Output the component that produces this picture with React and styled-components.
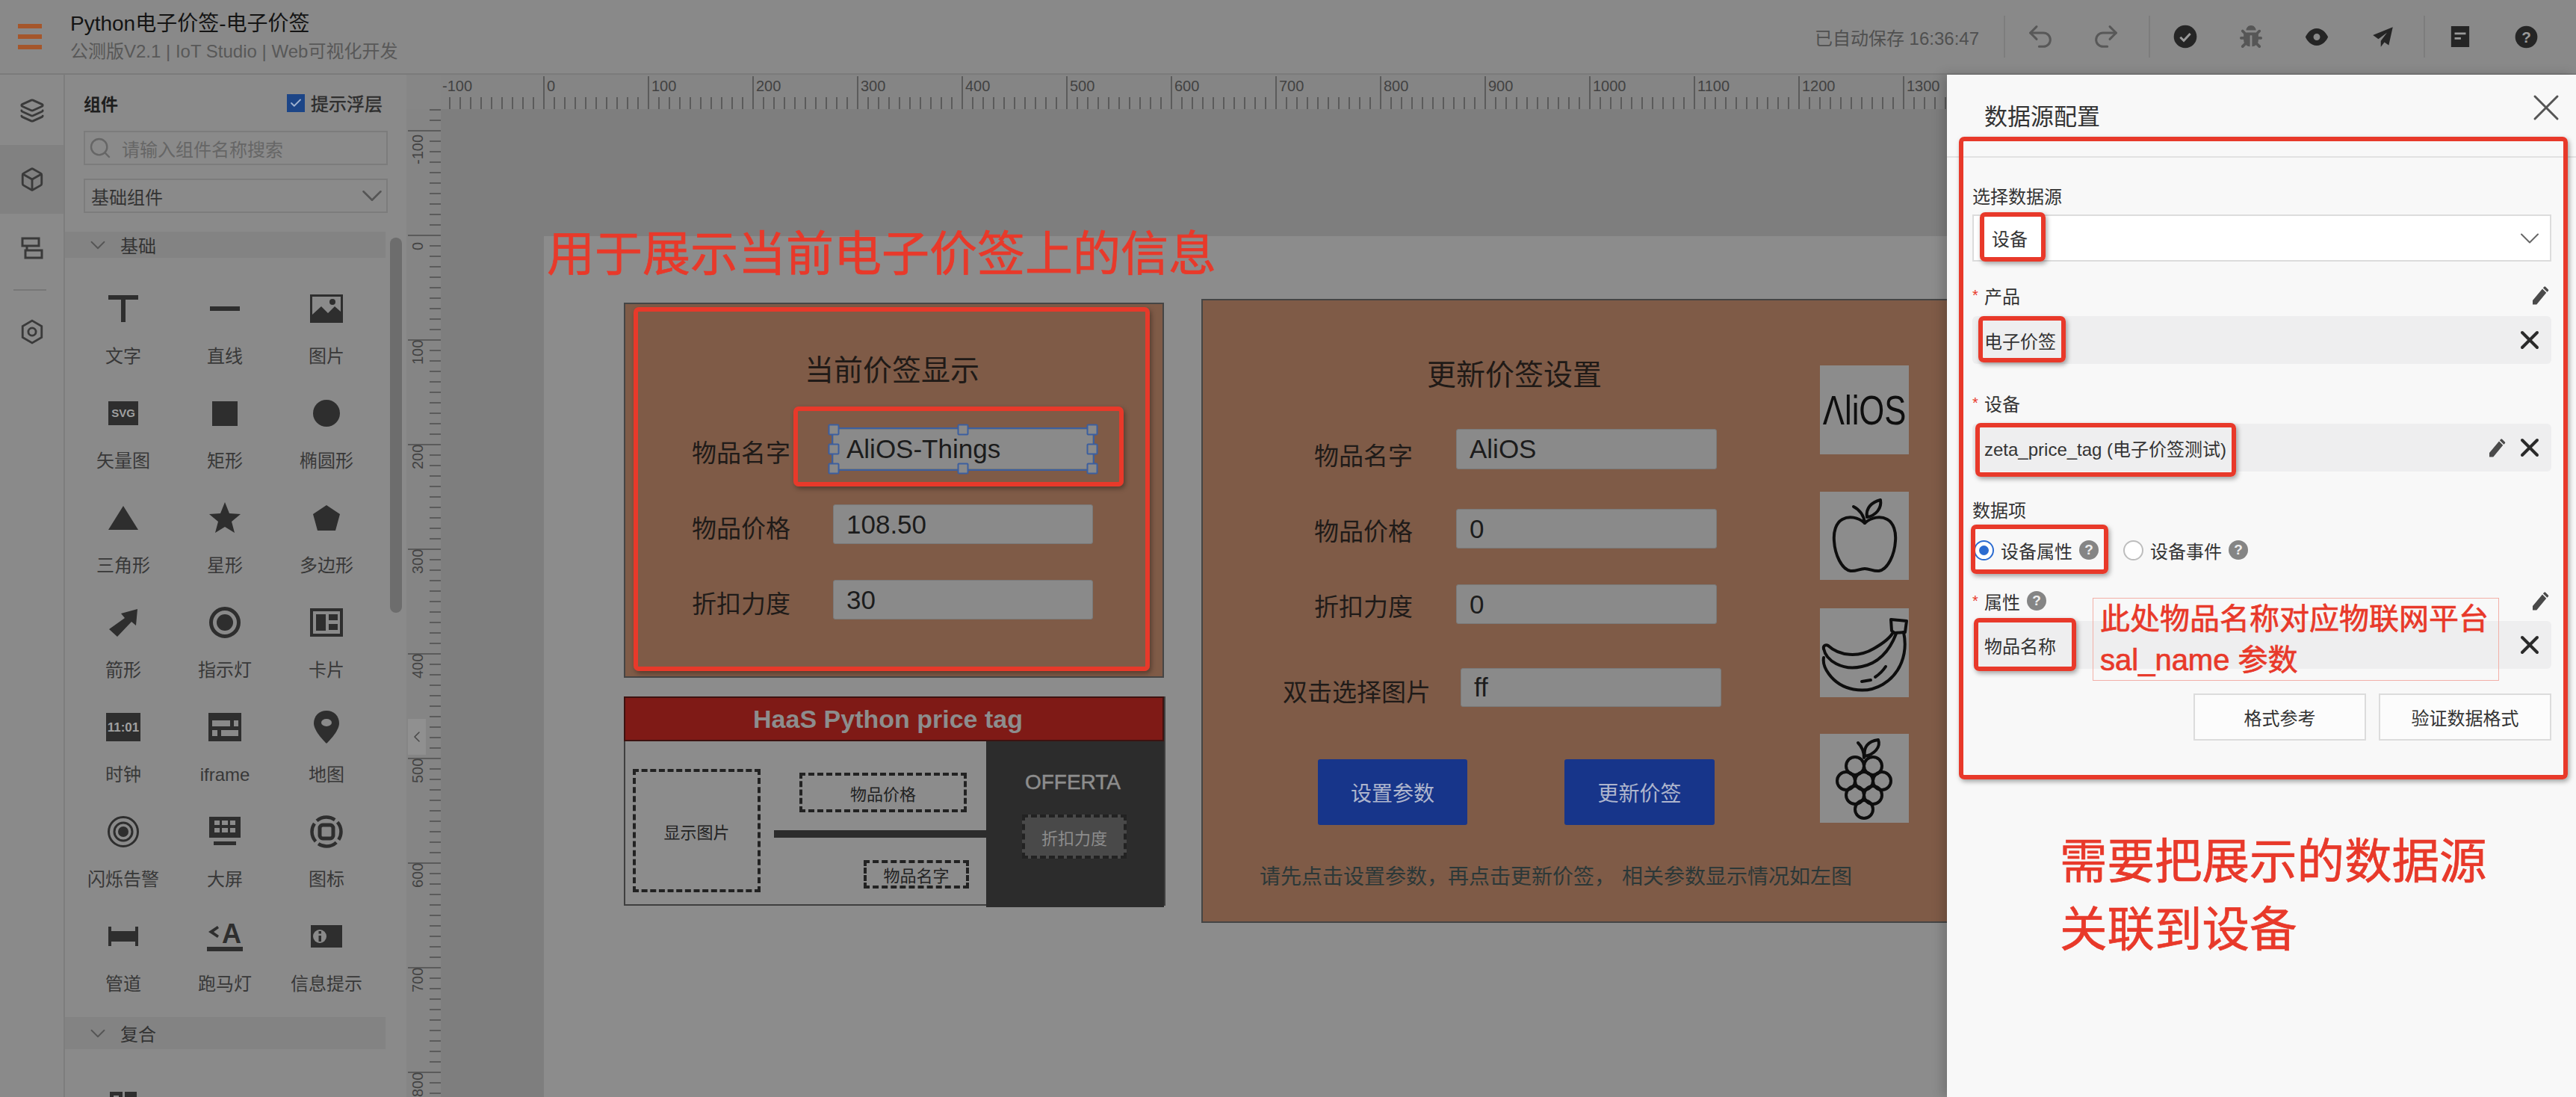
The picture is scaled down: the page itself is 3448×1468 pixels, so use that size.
import React from 'react'
import styled, { createGlobalStyle } from 'styled-components'
import { Layers, Box, Undo2, Redo2, ChevronDown, ChevronLeft, Search, X, Check } from 'lucide-react'
import { FaBug } from 'react-icons/fa'

const INK = '#2e2e2e'
const RED = '#e8392a'
const MUTED = '#8a8a8a'

const GlobalStyle = createGlobalStyle`
  html, body { margin: 0; padding: 0; background: ${MUTED}; }
  * { box-sizing: border-box; }
  body { font-family: "Liberation Sans", "Noto Sans CJK SC", sans-serif; }
`

const Screen = styled.div`
  position: relative;
  width: 3448px;
  height: 1468px;
  overflow: hidden;
  display: flex;
  flex-direction: column;
  background: ${MUTED};
`

/* top bar */
const Header = styled.header`
  flex: none;
  height: 100px;
  display: flex;
  align-items: center;
  background: #898989;
  border-bottom: 2px solid #7b7b7b;
`
const Burger = styled.div`
  width: 32px;
  margin: 0 38px 0 24px;
  display: flex;
  flex-direction: column;
  gap: 8px;
  span { display: block; height: 6px; background: #a5562b; }
`
const TitleBlock = styled.div`
  flex: 1;
  display: flex;
  flex-direction: column;
  gap: 5px;
`
const AppTitle = styled.div`
  font-size: 28px;
  line-height: 34px;
  color: #141414;
`
const AppSub = styled.div`
  font-size: 24px;
  line-height: 30px;
  color: #585858;
`
const Saved = styled.div`
  font-size: 24px;
  color: #505050;
  margin-right: 33px;
  white-space: nowrap;
`
const ToolDivider = styled.div`
  width: 2px;
  height: 56px;
  background: #7d7d7d;
`
const ToolButton = styled.div`
  width: 88px;
  height: 40px;
  display: flex;
  align-items: center;
  justify-content: center;
  color: ${p => p.$color || '#252525'};
`
const ToolGroup = styled.div`
  display: flex;
  align-items: center;
  padding: 0 ${p => p.$right}px 0 3px;
`

/* body */
const Main = styled.div`
  flex: 1;
  min-height: 0;
  display: flex;
`
const Rail = styled.nav`
  flex: none;
  width: 87px;
  background: #8a8a8a;
  border-right: 2px solid #7d7d7d;
  display: flex;
  flex-direction: column;
  color: #3a3a3a;
  padding-top: 2px;
`
const RailItem = styled.div`
  height: 92px;
  display: flex;
  align-items: center;
  justify-content: center;
  background: ${p => (p.$active ? '#818181' : 'transparent')};
`
const RailRule = styled.div`
  width: 44px;
  height: 2px;
  background: #777;
  margin: 9px 0 9px 18px;
`

const Palette = styled.aside`
  position: relative;
  flex: none;
  width: 457px;
  overflow: hidden;
  background: #8a8a8a;
  display: flex;
  flex-direction: column;
`
const PaletteHead = styled.div`
  flex: none;
  display: flex;
  align-items: center;
  justify-content: space-between;
  padding: 0 32px 0 25px;
  height: 75px;
`
const PaletteTitle = styled.div`
  font-size: 23px;
  font-weight: bold;
  color: #1e1e1e;
`
const Hint = styled.label`
  display: flex;
  align-items: center;
  gap: 8px;
  font-size: 24px;
  color: #2c2c2c;
  -webkit-text-stroke: 0.4px #2c2c2c;
`
const CheckBox = styled.span`
  width: 24px;
  height: 24px;
  background: #1c4587;
  color: #9fb2d0;
  display: flex;
  align-items: center;
  justify-content: center;
`
const PaletteInput = styled.div`
  flex: none;
  height: 46px;
  margin: ${p => p.$mt}px 25px 0;
  border: 2px solid #7c7c7c;
  display: flex;
  align-items: center;
  gap: 13px;
  padding: 0 8px 0 ${p => p.$pl}px;
  font-size: 24px;
  color: ${p => p.$dim ? '#666' : '#333'};
  white-space: nowrap;
`
const Spacer = styled.div`
  flex: 1;
`
const PaletteChevron = styled(ChevronDown)`
  flex: none;
  margin-right: -12px;
`
const SectionBar = styled.div`
  height: ${p => p.$h}px;
  width: 429px;
  margin-top: ${p => p.$mt}px;
  background: #838383;
  display: flex;
  align-items: center;
  gap: 13px;
  padding-left: 27px;
  font-size: 24px;
  color: #333;
  flex: none;
`
const IconGrid = styled.div`
  width: 429px;
  display: grid;
  grid-template-columns: repeat(3, 136px);
  grid-auto-rows: 140px;
  padding: ${p => p.$pt}px 0 0 10px;
  flex: none;
`
const IconCell = styled.div`
  display: flex;
  flex-direction: column;
  align-items: center;
  padding-top: 32px;
  gap: 26px;
  font-size: 24px;
  line-height: 28px;
  color: #383838;
  white-space: nowrap;
`
const ScrollThumb = styled.div`
  position: absolute;
  left: 435px;
  top: 218px;
  width: 16px;
  height: 502px;
  border-radius: 8px;
  background: #6d6d6d;
`

/* workspace with rulers */
const Workspace = styled.section`
  flex: 1;
  min-width: 0;
  display: grid;
  grid-template-columns: 46px 1fr;
  grid-template-rows: 46px 1fr;
  background: #868686;
  overflow: hidden;
`
const Corner = styled.div`
  background: #868686;
`
const RulerSvg = styled.svg`
  display: block;
  background: #858585;
  font-family: "Liberation Sans", sans-serif;
  font-size: 20px;
  text { fill: #424242; }
  line { stroke: #4e4e4e; stroke-width: 1.5; }
`
const LeftCell = styled.div`
  position: relative;
  overflow: hidden;
`
const CollapseTab = styled.div`
  position: absolute;
  left: 2px;
  top: 816px;
  width: 24px;
  height: 48px;
  background: #909090;
  color: #4a4a4a;
  display: flex;
  align-items: center;
  justify-content: center;
`
const Stage = styled.div`
  background: #7e7e7e;
  overflow: hidden;
  padding: 170px 0 0 138px;
`

/* free canvas: widgets sit where the user dropped them */
const Page = styled.div`
  position: relative;
  width: 2400px;
  height: 1200px;
  background: #8c8c8c;
`
const at = p => `left:${p.$x}px;top:${p.$y}px;width:${p.$w}px;height:${p.$h}px;`
const box = (x1, y1, x2, y2) => ({ $x: x1 - 728, $y: y1 - 316, $w: x2 - x1, $h: y2 - y1 })

const Panel = styled.div`
  position: absolute;
  ${at}
  background: #7f5b47;
  border: 2px solid #454545;
`
const PanelTitle = styled.div`
  position: absolute;
  ${at}
  display: flex;
  align-items: center;
  justify-content: center;
  font-size: 39px;
  color: #201a17;
  white-space: nowrap;
`
const FieldLabel = styled.div`
  position: absolute;
  ${at}
  display: flex;
  align-items: center;
  font-size: 33px;
  color: #1f1b19;
  white-space: nowrap;
`
const ValueBox = styled.div`
  position: absolute;
  ${at}
  display: flex;
  align-items: center;
  padding-left: 17px;
  background: ${MUTED};
  border: 1px solid #7a7a7a;
  border-radius: 3px;
  font-size: 35px;
  color: #1c1c1c;
  outline: ${p => (p.$selected ? '2px solid #3c5f9f' : 'none')};
`
const Handle = styled.i`
  position: absolute;
  left: ${p => p.$left}%;
  top: ${p => p.$top}%;
  width: 15px;
  height: 15px;
  transform: translate(-50%, -50%);
  background: ${MUTED};
  border: 2px solid #3c5f9f;
  border-radius: 2px;
`
const TagHeader = styled.div`
  position: absolute;
  ${at}
  background: #7f1a16;
  border: 2px solid #3d1210;
  display: flex;
  align-items: center;
  justify-content: center;
  padding-right: 16px;
  font-size: 34px;
  font-weight: bold;
  color: #8d8d8d;
`
const TagFrame = styled.div`
  position: absolute;
  ${at}
  border: 2px solid #3f3f3f;
  background: #8c8c8c;
`
const TagDark = styled.div`
  position: absolute;
  ${at}
  background: #2c2c2c;
`
const TagOffer = styled.div`
  position: absolute;
  ${at}
  display: flex;
  align-items: center;
  justify-content: center;
  font-size: 28px;
  color: #8d8d8d;
  -webkit-text-stroke: 0.5px #8d8d8d;
`
const Dashed = styled.div`
  position: absolute;
  ${at}
  border: 4px dashed #222;
  background: ${p => p.$fill || 'transparent'};
  color: ${p => p.$fg || '#222'};
  display: flex;
  align-items: center;
  justify-content: center;
  font-size: 22px;
  white-space: nowrap;
`
const TagBar = styled.div`
  position: absolute;
  ${at}
  background: #2c2c2c;
`
const ActionButton = styled.div`
  position: absolute;
  ${at}
  background: #17358a;
  border-radius: 3px;
  display: flex;
  align-items: center;
  justify-content: center;
  font-size: 28px;
  color: #aeb5cd;
`
const HintRow = styled.div`
  position: absolute;
  ${at}
  display: flex;
  align-items: center;
  gap: 9px;
  font-size: 28px;
  color: #2c3838;
  white-space: nowrap;
`
const Picture = styled.div`
  position: absolute;
  ${at}
  background: #8c8c8c;
  display: flex;
  align-items: center;
  justify-content: center;
  overflow: hidden;
  svg { fill: none; stroke: #0e0e0e; stroke-width: 4; stroke-linecap: round; stroke-linejoin: round; }
`
const AliosLogo = styled.span`
  font-size: 56px;
  line-height: 1;
  color: #0e0e0e;
  transform: scaleX(0.78);
  white-space: nowrap;
`

/* data source drawer */
const Drawer = styled.aside`
  position: absolute;
  top: 100px;
  right: 0;
  bottom: 0;
  width: 842px;
  background: #f8f8f8;
  box-shadow: -6px 0 14px rgba(0, 0, 0, 0.18);
`
const DrawerHead = styled.div`
  height: 111px;
  border-bottom: 2px solid #e2e2e2;
  display: flex;
  justify-content: space-between;
  padding: 37px 22px 0 50px;
`
const DrawerTitle = styled.div`
  font-size: 31px;
  line-height: 40px;
  color: #333;
`
const CloseIcon = styled(X)`
  margin: -23px -12px 0 0;
`
const DrawerBody = styled.div`
  padding: 0 33px 0 34px;
  display: flex;
  flex-direction: column;
`
const FormLabel = styled.div`
  margin-top: ${p => p.$mt}px;
  height: 28px;
  display: flex;
  align-items: center;
  justify-content: space-between;
  font-size: 24px;
  color: #333;
`
const LabelText = styled.span`
  display: flex;
  align-items: center;
  gap: 9px;
`
const Star = styled.span`
  width: 7px;
  color: ${RED};
  font-size: 20px;
`
const SelectBox = styled.div`
  margin-top: ${p => p.$mt}px;
  height: 63px;
  background: #fff;
  border: 2px solid #dcdcdc;
  display: flex;
  align-items: center;
  justify-content: space-between;
  padding: 0 5px 0 24px;
  font-size: 24px;
  color: #333;
`
const ReadField = styled.div`
  margin-top: ${p => p.$mt}px;
  height: 64px;
  border-radius: 6px;
  background: #eeeeef;
  display: flex;
  align-items: center;
  justify-content: space-between;
  padding: 0 9px 0 16px;
  font-size: 24px;
  color: #333;
`
const FieldActions = styled.div`
  display: flex;
  align-items: center;
  gap: 9px;
  color: #2a2a2a;
`
const RadioRow = styled.div`
  margin-top: ${p => p.$mt}px;
  height: 28px;
  display: flex;
  align-items: center;
  padding-left: 2px;
  gap: 33px;
`
const RadioItem = styled.div`
  display: flex;
  align-items: center;
  gap: 9px;
  font-size: 24px;
  color: #333;
`
const RadioDot = styled.span`
  width: 27px;
  height: 27px;
  border-radius: 50%;
  background: #fff;
  border: 2px solid ${p => (p.$on ? '#2b6bd0' : '#bdbdbd')};
  display: flex;
  align-items: center;
  justify-content: center;
  &::after {
    content: '';
    width: 13px;
    height: 13px;
    border-radius: 50%;
    background: ${p => (p.$on ? '#2b6bd0' : 'transparent')};
  }
`
const HelpBadge = styled.span`
  width: 26px;
  height: 26px;
  border-radius: 50%;
  background: #858585;
  color: #eee;
  font-size: 19px;
  font-weight: bold;
  display: flex;
  align-items: center;
  justify-content: center;
`
const ButtonRow = styled.div`
  margin-top: ${p => p.$mt}px;
  display: flex;
  justify-content: flex-end;
  gap: 17px;
`
const GhostButton = styled.div`
  width: 231px;
  height: 63px;
  background: #fcfcfc;
  border: 2px solid #dcdcdc;
  display: flex;
  align-items: center;
  justify-content: center;
  font-size: 24px;
  color: #333;
`

/* red annotations drawn on top of the screenshot */
const Mark = styled.div`
  position: absolute;
  left: ${p => p.$x1}px;
  top: ${p => p.$y1}px;
  width: ${p => p.$x2 - p.$x1}px;
  height: ${p => p.$y2 - p.$y1}px;
  border: 6px solid ${RED};
  border-radius: 7px;
  box-shadow: 2px 3px 6px rgba(0, 0, 0, 0.35);
`
const Note = styled.div`
  position: absolute;
  left: ${p => p.$x}px;
  top: ${p => p.$y}px;
  font-size: ${p => p.$size}px;
  line-height: ${p => p.$lh}px;
  color: ${RED};
  -webkit-text-stroke: 0.7px ${RED};
  white-space: nowrap;
`
const NoteBox = styled(Note)`
  width: 544px;
  height: 111px;
  padding-left: 9px;
  border: 1.5px solid #f3b0a8;
  display: flex;
  flex-direction: column;
  justify-content: center;
`

/* hand drawn icons */
const Svg = ({ size = 30, w, h, vb = '0 0 48 48', children, ...rest }) => (
  <svg width={w || size} height={h || size} viewBox={vb} {...rest}>{children}</svg>
)

const Pencil = () => (
  <Svg size={30} vb="0 0 24 24" fill="#4a4a4a">
    <path d="M4 17.5V22h4.2L18.6 9.4l-4.2-4.2L4 17.5zM20.7 7.3a1 1 0 0 0 0-1.4l-3-3a1 1 0 0 0-1.4 0l-1.2 1.2 4.4 4.4 1.2-1.2z" />
  </Svg>
)
const Cross = () => <X size={40} strokeWidth={2.4} color="#2a2a2a" />

const SvgLabel = styled.text`
  font-family: "Liberation Sans", sans-serif;
  font-weight: bold;
`

const GLYPHS = {
  text: <path d="M4 6h40v6H27v30h-6V12H4z" />,
  line: <rect x="4" y="21" width="40" height="6" />,
  image: <>
    <rect x="2" y="5" width="44" height="38" />
    <path d="M5 8h38v20l-8-7-9 9-9-9-12 11z" fill={MUTED} />
    <circle cx="32" cy="15" r="4" />
  </>,
  svg: <>
    <rect x="4" y="8" width="40" height="32" />
    <SvgLabel x="24" y="29" fontSize="15" textAnchor="middle" fill="#a0a0a0">SVG</SvgLabel>
  </>,
  rect: <rect x="7" y="8" width="34" height="33" />,
  ellipse: <circle cx="24" cy="24" r="18" />,
  triangle: <polygon points="24,8 44,40 4,40" />,
  star: <polygon points="24,3 30,18 45,19 33,29 37,44 24,36 11,44 15,29 3,19 18,18" />,
  polygon: <polygon points="24,7 42,19 36,41 12,41 6,19" />,
  arrow: <path d="M5 33 26 18l-5-6 22-6-2 22-6-5-19 20z" />,
  lamp: <>
    <circle cx="24" cy="24" r="18.5" fill="none" stroke={INK} strokeWidth="5" />
    <circle cx="24" cy="24" r="11" />
  </>,
  card: <>
    <rect x="4" y="7" width="40" height="34" fill="none" stroke={INK} strokeWidth="4" />
    <rect x="10" y="13" width="13" height="22" />
    <rect x="27" y="13" width="12" height="8" />
    <rect x="27" y="26" width="12" height="8" />
  </>,
  clock: <>
    <rect x="1" y="5" width="46" height="38" />
    <SvgLabel x="24" y="30" fontSize="17" textAnchor="middle" fill="#a0a0a0">11:01</SvgLabel>
  </>,
  iframe: <>
    <rect x="2" y="5" width="44" height="38" />
    <path d="M7 15h24v8H7zM36 15h6v8h-6zM7 28h7v8H7zM19 28h23v8H19z" fill={MUTED} />
  </>,
  pin: <>
    <path d="M24 2C14 2 7 9 7 19c0 11 17 27 17 27s17-16 17-27C41 9 34 2 24 2z" />
    <ellipse cx="24" cy="18" rx="7" ry="5" fill={MUTED} />
  </>,
  flash: <>
    <circle cx="24" cy="24" r="19.5" fill="none" stroke={INK} strokeWidth="3" />
    <circle cx="24" cy="24" r="12" fill="none" stroke={INK} strokeWidth="3" />
    <circle cx="24" cy="24" r="7" />
  </>,
  screen: <>
    <rect x="3" y="4" width="42" height="28" />
    <path d="M10 9h7v6h-7zM20 9h8v6h-8zM31 9h7v6h-7zM10 19h7v6h-7zM20 19h8v6h-8zM31 19h7v6h-7z" fill={MUTED} />
    <rect x="9" y="37" width="30" height="5" />
  </>,
  badge: <>
    <circle cx="24" cy="24" r="19.5" fill="none" stroke={INK} strokeWidth="4.5" strokeDasharray="26 4.6" strokeDashoffset="-16" />
    <rect x="15" y="15" width="18" height="18" rx="4" fill="none" stroke={INK} strokeWidth="5" />
  </>,
  pipe: <>
    <rect x="4" y="11" width="4" height="26" />
    <rect x="4" y="17" width="40" height="14" />
    <rect x="40" y="11" width="4" height="26" />
  </>,
  marquee: <>
    <path d="M14 10 2 18l12 8 2-3-7-5 7-5z" />
    <SvgLabel x="33" y="33" fontSize="36" textAnchor="middle" fill={INK}>A</SvgLabel>
    <rect y="38" width="48" height="6" />
  </>,
  info: <>
    <rect x="3" y="9" width="42" height="30" />
    <circle cx="15" cy="24" r="9" fill={MUTED} />
    <rect x="13.5" y="23" width="3.5" height="8" />
    <rect x="13.5" y="17" width="3.5" height="3.5" />
  </>,
  combo: <>
    <path fillRule="evenodd" d="M6 8h17v18H6zM11 13v8h7v-8z" />
    <rect x="26" y="8" width="16" height="36" />
    <rect x="6" y="29" width="17" height="15" />
  </>,
}

const BASIC = [
  ['text', '文字'], ['line', '直线'], ['image', '图片'],
  ['svg', '矢量图'], ['rect', '矩形'], ['ellipse', '椭圆形'],
  ['triangle', '三角形'], ['star', '星形'], ['polygon', '多边形'],
  ['arrow', '箭形'], ['lamp', '指示灯'], ['card', '卡片'],
  ['clock', '时钟'], ['iframe', 'iframe'], ['pin', '地图'],
  ['flash', '闪烁告警'], ['screen', '大屏'], ['badge', '图标'],
  ['pipe', '管道'], ['marquee', '跑马灯'], ['info', '信息提示'],
]

const ComponentCell = ({ glyph, label }) => (
  <IconCell>
    <Svg size={48} fill={INK}>{GLYPHS[glyph]}</Svg>
    {label}
  </IconCell>
)

const range = (from, to, step) => {
  const out = []
  for (let u = from; u <= to; u += step) out.push(u)
  return out
}

const TopRuler = () => (
  <RulerSvg width="2858" height="46">
    {range(-100, 1900, 10).map(u => {
      const x = 138 + u * 1.4
      const major = u % 100 === 0
      return (
        <g key={u}>
          <line x1={x} x2={x} y1={major ? 2 : 30} y2={46} />
          {major && <text x={x + 4} y={22}>{u}</text>}
        </g>
      )
    })}
  </RulerSvg>
)

const LeftRuler = () => (
  <RulerSvg width="46" height="1322">
    {range(-120, 820, 10).map(u => {
      const y = 169 + u * 1.4
      const major = u % 100 === 0
      return (
        <g key={u}>
          <line x1={major ? 2 : 31} x2={46} y1={y} y2={y} />
          {major && (
            <text transform={`translate(22 ${y + (u < 0 ? 45 : u === 0 ? 20 : 33)}) rotate(-90)`}>{u}</text>
          )}
        </g>
      )
    })}
  </RulerSvg>
)

const HANDLES = [[0, 0], [50, 0], [100, 0], [0, 50], [100, 50], [0, 100], [50, 100], [100, 100]]

const CurrentTag = () => (
  <>
    <Panel {...box(835, 405, 1558, 907)} />
    <PanelTitle {...box(1079, 472, 1309, 512)}>当前价签显示</PanelTitle>
    <FieldLabel {...box(926, 584, 1060, 624)}>物品名字</FieldLabel>
    <FieldLabel {...box(926, 685, 1060, 725)}>物品价格</FieldLabel>
    <FieldLabel {...box(926, 786, 1060, 826)}>折扣力度</FieldLabel>
    <ValueBox $selected {...box(1115, 574, 1463, 628)}>
      AliOS-Things
      {HANDLES.map(([l, t]) => <Handle key={`${l}-${t}`} $left={l} $top={t} />)}
    </ValueBox>
    <ValueBox {...box(1115, 675, 1463, 728)}>108.50</ValueBox>
    <ValueBox {...box(1115, 776, 1463, 829)}>30</ValueBox>
  </>
)

const TagPreview = () => (
  <>
    <TagFrame {...box(835, 932, 1560, 1212)} />
    <TagHeader {...box(835, 932, 1558, 992)}>HaaS Python price tag</TagHeader>
    <TagDark {...box(1320, 992, 1558, 1214)} />
    <Dashed {...box(847, 1029, 1018, 1194)}>显示图片</Dashed>
    <Dashed {...box(1070, 1034, 1294, 1087)}>物品价格</Dashed>
    <TagBar {...box(1036, 1111, 1325, 1121)} />
    <Dashed {...box(1156, 1151, 1297, 1189)}>物品名字</Dashed>
    <TagOffer {...box(1368, 1027, 1504, 1067)}>OFFERTA</TagOffer>
    <Dashed $fill="#494949" $fg="#8d8d8d" {...box(1368, 1090, 1508, 1149)}>折扣力度</Dashed>
  </>
)

const UpdateTag = () => (
  <>
    <Panel {...box(1608, 400, 2700, 1235)} />
    <PanelTitle {...box(1911, 478, 2143, 518)}>更新价签设置</PanelTitle>
    <FieldLabel {...box(1759, 588, 1893, 628)}>物品名字</FieldLabel>
    <FieldLabel {...box(1759, 689, 1893, 729)}>物品价格</FieldLabel>
    <FieldLabel {...box(1759, 790, 1893, 830)}>折扣力度</FieldLabel>
    <FieldLabel {...box(1717, 904, 1917, 944)}>双击选择图片</FieldLabel>
    <ValueBox {...box(1949, 574, 2298, 628)}>AliOS</ValueBox>
    <ValueBox {...box(1949, 681, 2298, 734)}>0</ValueBox>
    <ValueBox {...box(1949, 782, 2298, 835)}>0</ValueBox>
    <ValueBox {...box(1955, 894, 2304, 946)}>ff</ValueBox>
    <ActionButton {...box(1764, 1016, 1964, 1104)}>设置参数</ActionButton>
    <ActionButton {...box(2094, 1016, 2295, 1104)}>更新价签</ActionButton>
    <HintRow {...box(1686, 1151, 2500, 1191)}>
      <span>请先点击设置参数，再点击更新价签，</span>
      <span>相关参数显示情况如左图</span>
    </HintRow>
    <Picture {...box(2436, 489, 2555, 608)}>
      <AliosLogo>ΛliOS</AliosLogo>
    </Picture>
    <Picture {...box(2436, 658, 2555, 776)}>
      <Svg size={118} vb="0 0 118 118">
        <path d="M59 42C50 34 38 32 29 37 20 42 17 54 18 66c1 18 10 38 22 40 7 1 12-3 19-3s12 4 19 3c12-2 21-22 22-40 1-12-2-24-11-29-9-5-21-3-30 5z" />
        <path d="M59 42c-1-10-7-18-15-22" />
        <path d="M62 34c-2-12 6-20 18-23 2 11-6 21-18 23z" />
      </Svg>
    </Picture>
    <Picture {...box(2436, 814, 2555, 933)}>
      <Svg size={119} vb="0 0 119 119">
        <path d="M95 15l21 2-2 15-14 1-4-3z" />
        <path d="M112 32c6 28-4 56-28 70-24 14-56 8-72-14-6-8-8-16-7-22" />
        <path d="M5 54c-1-4 3-6 6-4 15 14 41 16 61 4 14-8 22-14 26-22" />
        <path d="M5 54c3 16 25 30 51 24 20-4 36-18 46-44" />
        <path d="M56 98l12-2M74 92c6-4 10-8 14-14" />
      </Svg>
    </Picture>
    <Picture {...box(2436, 982, 2555, 1101)}>
      <Svg size={119} vb="0 0 119 119">
        <circle cx="47" cy="43" r="12" /><circle cx="71" cy="43" r="12" />
        <circle cx="35" cy="63" r="12" /><circle cx="59" cy="63" r="12" /><circle cx="83" cy="63" r="12" />
        <circle cx="47" cy="82" r="12" /><circle cx="71" cy="82" r="12" />
        <circle cx="59" cy="101" r="12" />
        <path d="M59 32c0-8-2-14-8-20" />
        <path d="M60 30c-2-12 4-20 18-22 4 10-6 20-18 22z" />
      </Svg>
    </Picture>
  </>
)

const Required = ({ children }) => (
  <LabelText><Star>*</Star>{children}</LabelText>
)

const DataSourceDrawer = () => (
  <Drawer>
    <DrawerHead>
      <DrawerTitle>数据源配置</DrawerTitle>
      <CloseIcon size={60} strokeWidth={1.2} color="#555" />
    </DrawerHead>
    <DrawerBody>
      <FormLabel $mt={36}>选择数据源</FormLabel>
      <SelectBox $mt={12}>设备<ChevronDown size={44} strokeWidth={1.1} color="#666" /></SelectBox>
      <FormLabel $mt={31}><Required>产品</Required><Pencil /></FormLabel>
      <ReadField $mt={14}>电子价签<Cross /></ReadField>
      <FormLabel $mt={38}><Required>设备</Required></FormLabel>
      <ReadField $mt={14}>
        zeta_price_tag (电子价签测试)
        <FieldActions><Pencil /><Cross /></FieldActions>
      </ReadField>
      <FormLabel $mt={36}>数据项</FormLabel>
      <RadioRow $mt={27}>
        <RadioItem><RadioDot $on />设备属性<HelpBadge>?</HelpBadge></RadioItem>
        <RadioItem><RadioDot />设备事件<HelpBadge>?</HelpBadge></RadioItem>
      </RadioRow>
      <FormLabel $mt={40}><Required>属性<HelpBadge>?</HelpBadge></Required><Pencil /></FormLabel>
      <ReadField $mt={13}>物品名称<Cross /></ReadField>
      <ButtonRow $mt={33}>
        <GhostButton>格式参考</GhostButton>
        <GhostButton>验证数据格式</GhostButton>
      </ButtonRow>
    </DrawerBody>
  </Drawer>
)

const MARKS = [
  [848, 411, 1539, 898], [1062, 544, 1504, 651],
  [2622, 183, 3437, 1043], [2650, 284, 2738, 350], [2648, 423, 2765, 485],
  [2644, 566, 2993, 638], [2638, 702, 2822, 768], [2642, 827, 2779, 898],
]

export default function App() {
  return (
    <Screen>
      <GlobalStyle />
      <Header>
        <Burger><span /><span /><span /></Burger>
        <TitleBlock>
          <AppTitle>Python电子价签-电子价签</AppTitle>
          <AppSub>公测版V2.1 | IoT Studio | Web可视化开发</AppSub>
        </TitleBlock>
        <Saved>已自动保存 16:36:47</Saved>
        <ToolDivider />
        <ToolGroup $right={13}>
          <ToolButton $color="#585858"><Undo2 size={40} strokeWidth={1.8} /></ToolButton>
          <ToolButton $color="#585858"><Redo2 size={40} strokeWidth={1.8} /></ToolButton>
        </ToolGroup>
        <ToolDivider />
        <ToolGroup $right={11}>
          <ToolButton>
            <Svg size={32} vb="0 0 24 24">
              <circle cx="12" cy="12" r="11.5" fill="#252525" />
              <path d="M7 12.5l3.5 3.5L17 9" fill="none" stroke="#9a9a9a" strokeWidth="2.2" />
            </Svg>
          </ToolButton>
          <ToolButton $color="#565656"><FaBug size={30} /></ToolButton>
          <ToolButton>
            <Svg w={32} h={27} vb="0 0 36 30">
              <path fillRule="evenodd" fill="#252525" d="M18 2C9 2 3 10 1 15c2 5 8 13 17 13s15-8 17-13c-2-5-8-13-17-13zm0 8a5 5 0 1 1 0 10 5 5 0 0 1 0-10z" />
            </Svg>
          </ToolButton>
          <ToolButton>
            <Svg size={29} vb="0 0 24 24">
              <path fill="#252525" d="M23 1 1 10l6 4.2 9.5-7-6.8 9.2V23l4-5.2 4.8 3.2z" />
            </Svg>
          </ToolButton>
        </ToolGroup>
        <ToolDivider />
        <ToolGroup $right={23}>
          <ToolButton>
            <Svg w={26} h={28} vb="0 0 26 30">
              <rect width="26" height="30" fill="#252525" />
              <path d="M5 9h16v3H5zM5 16h9v3H5z" fill="#9a9a9a" />
            </Svg>
          </ToolButton>
          <ToolButton>
            <Svg size={31} vb="0 0 24 24">
              <circle cx="12" cy="12" r="11.5" fill="#252525" />
              <SvgLabel x="12" y="18" fontSize="16" textAnchor="middle" fill="#9a9a9a">?</SvgLabel>
            </Svg>
          </ToolButton>
        </ToolGroup>
      </Header>
      <Main>
        <Rail>
          <RailItem><Layers size={34} strokeWidth={2} /></RailItem>
          <RailItem $active><Box size={34} strokeWidth={2} /></RailItem>
          <RailItem>
            <Svg size={30} vb="0 0 30 30">
              <path d="M2 2h22v10H2zM2 12M6 18h22v10H6z" fill="none" stroke="#3a3a3a" strokeWidth="3" />
              <path d="M8 12v6" stroke="#3a3a3a" strokeWidth="3" />
            </Svg>
          </RailItem>
          <RailRule />
          <RailItem>
            <Svg size={34} vb="0 0 24 24">
              <path d="M12 1.5l9 5.2v10.6l-9 5.2-9-5.2V6.7z" fill="none" stroke="#3a3a3a" strokeWidth="2" />
              <circle cx="12" cy="12" r="3.6" fill="none" stroke="#3a3a3a" strokeWidth="2" />
            </Svg>
          </RailItem>
        </Rail>
        <Palette>
          <PaletteHead>
            <PaletteTitle>组件</PaletteTitle>
            <Hint><CheckBox><Check size={18} strokeWidth={2.4} /></CheckBox>提示浮层</Hint>
          </PaletteHead>
          <PaletteInput $mt={0} $pl={4} $dim>
            <Search size={32} strokeWidth={1.8} color="#666" />请输入组件名称搜索
          </PaletteInput>
          <PaletteInput $mt={18} $pl={8}>
            基础组件<Spacer /><PaletteChevron size={46} strokeWidth={1.3} color="#555" />
          </PaletteInput>
          <SectionBar $h={35} $mt={25}>
            <ChevronDown size={34} strokeWidth={1.3} color="#555" />基础
          </SectionBar>
          <IconGrid $pt={12}>
            {BASIC.map(([glyph, label]) => <ComponentCell key={label} glyph={glyph} label={label} />)}
          </IconGrid>
          <SectionBar $h={43} $mt={24}>
            <ChevronDown size={34} strokeWidth={1.3} color="#555" />复合
          </SectionBar>
          <IconGrid $pt={17}>
            <ComponentCell glyph="combo" label="" />
          </IconGrid>
          <ScrollThumb />
        </Palette>
        <Workspace>
          <Corner />
          <TopRuler />
          <LeftCell>
            <LeftRuler />
            <CollapseTab><ChevronLeft size={26} strokeWidth={1.6} /></CollapseTab>
          </LeftCell>
          <Stage>
            <Page>
              <CurrentTag />
              <TagPreview />
              <UpdateTag />
            </Page>
          </Stage>
        </Workspace>
      </Main>
      <DataSourceDrawer />
      {MARKS.map(([x1, y1, x2, y2]) => (
        <Mark key={`${x1}-${y1}`} $x1={x1} $y1={y1} $x2={x2} $y2={y2} />
      ))}
      <Note $x={732} $y={308} $size={64} $lh={64}>用于展示当前电子价签上的信息</Note>
      <NoteBox $x={2801} $y={800} $size={40} $lh={55}>
        <span>此处物品名称对应物联网平台</span>
        <span>sal_name 参数</span>
      </NoteBox>
      <Note $x={2757} $y={1108} $size={63.5} $lh={91}>
        需要把展示的数据源<br />关联到设备
      </Note>
    </Screen>
  )
}
